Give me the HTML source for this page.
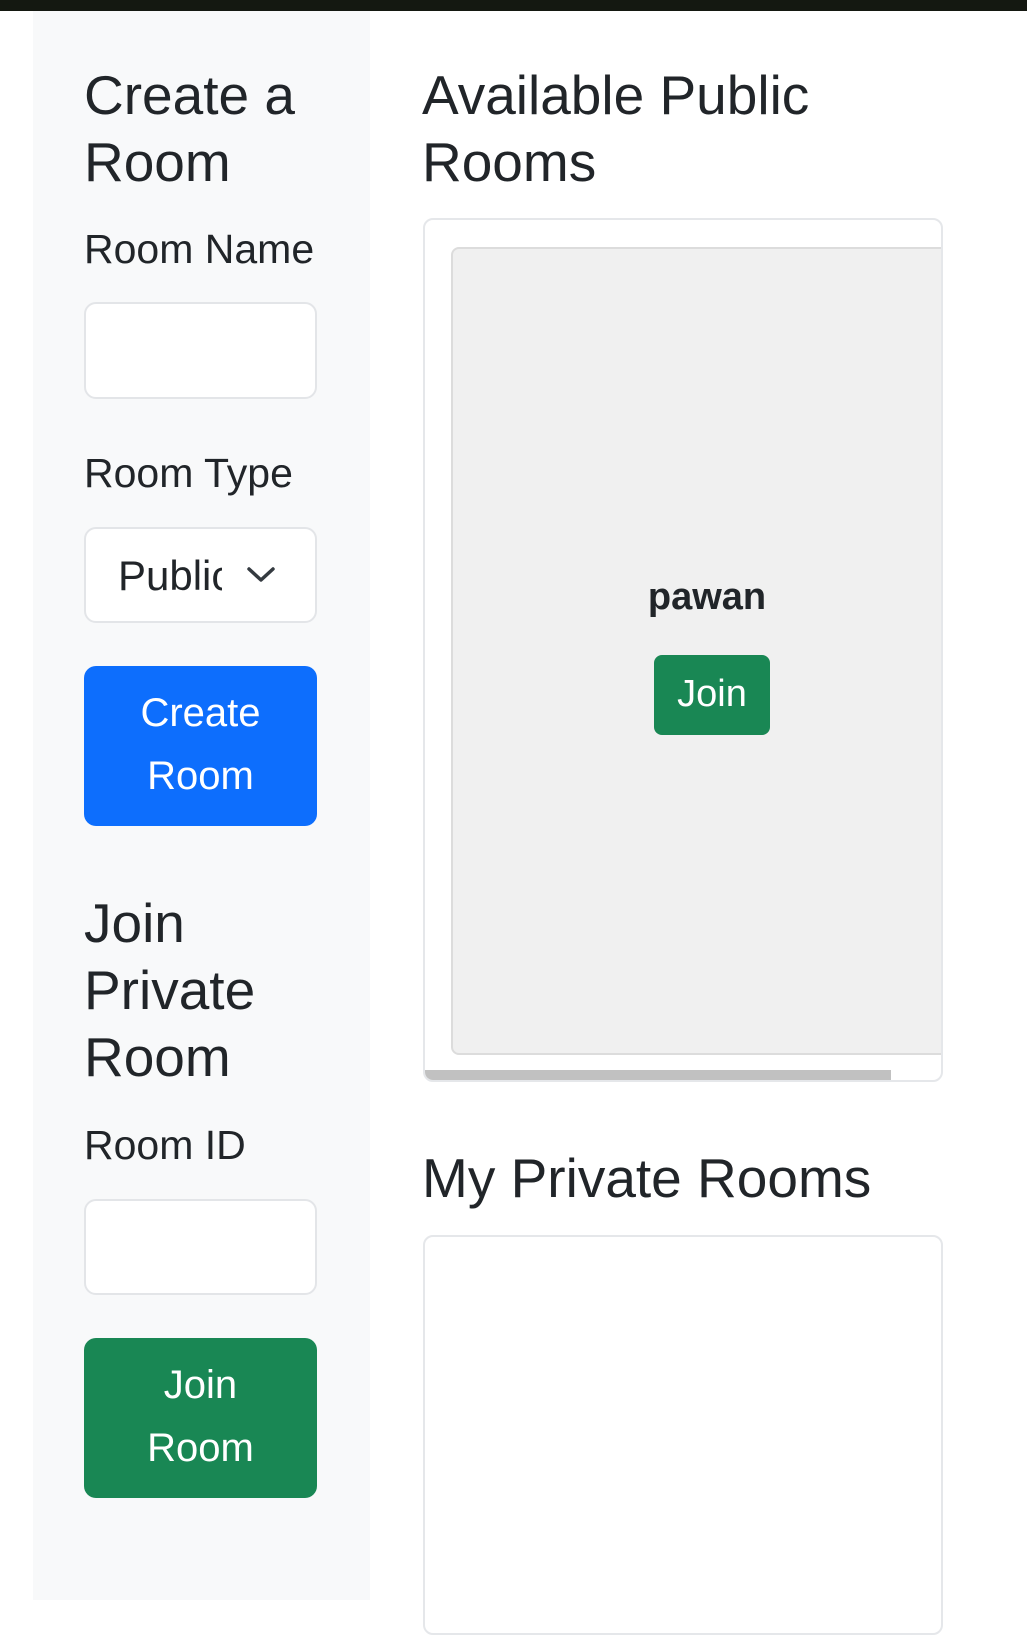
<!DOCTYPE html>
<html><head><meta charset="utf-8">
<style>
*{margin:0;padding:0;box-sizing:border-box}
body{width:1027px;height:1600px;background:#fff;font-family:"Liberation Sans",sans-serif;color:#212529;position:relative;overflow:hidden}
.a{position:absolute}
.h{font-size:55px;line-height:67px;white-space:nowrap}
.lbl{font-size:41px;color:#212529;line-height:46px;white-space:nowrap}
.inp{background:#fff;border:2px solid #e3e5e8;border-radius:12px}
.btn{border-radius:12px;color:#fff;font-size:40px;text-align:center;line-height:63px}
</style></head><body>
<div class="a" style="left:0;top:0;width:1027px;height:11px;background:#141811"></div>
<div class="a" style="left:33px;top:11px;width:337px;height:1589px;background:#f8f9fa"></div>

<div class="a h" style="left:84px;top:62px">Create a<br>Room</div>
<div class="a lbl" style="left:84px;top:226px">Room Name</div>
<div class="a inp" style="left:84px;top:302px;width:233px;height:97px"></div>
<div class="a lbl" style="left:84px;top:450px">Room Type</div>
<div class="a inp" style="left:84px;top:527px;width:233px;height:96px">
  <div class="a" style="left:32px;top:24px;font-size:42px;line-height:46px;width:104px;overflow:hidden;white-space:nowrap">Public</div>
  <svg class="a" style="left:160px;top:36px" width="30" height="20" viewBox="0 0 30 20"><path d="M3 4 L15 15 L27 4" fill="none" stroke="#343a40" stroke-width="3.5" stroke-linecap="round" stroke-linejoin="round"/></svg>
</div>
<div class="a btn" style="left:84px;top:666px;width:233px;height:160px;background:#0d6efd;padding-top:16px">Create<br>Room</div>

<div class="a h" style="left:84px;top:890px">Join<br>Private<br>Room</div>
<div class="a lbl" style="left:84px;top:1122px">Room ID</div>
<div class="a inp" style="left:84px;top:1199px;width:233px;height:96px"></div>
<div class="a btn" style="left:84px;top:1338px;width:233px;height:160px;background:#198754;padding-top:16px">Join<br>Room</div>

<div class="a h" style="left:422px;top:62px">Available Public<br>Rooms</div>
<div class="a" style="left:423px;top:218px;width:520px;height:864px;border:2px solid #e5e7ea;border-radius:10px;overflow:hidden;background:#fff">
  <div class="a" style="left:26px;top:27px;width:520px;height:808px;background:#f0f0f0;border:2px solid #dcdcdc;border-radius:8px">
    <div class="a" style="left:0;width:516px;top:326px;text-align:center;font-weight:bold;font-size:38px;line-height:44px">
      <span style="position:relative;left:-4px">pawan</span></div>
    <div class="a" style="left:201px;top:406px;width:116px;height:80px;background:#198754;border-radius:8px;color:#fff;font-size:38px;line-height:78px;text-align:center">Join</div>
  </div>
  <div class="a" style="left:0;top:850px;width:466px;height:10px;background:#c1c1c1"></div>
</div>

<div class="a h" style="left:422px;top:1145px">My Private Rooms</div>
<div class="a" style="left:423px;top:1235px;width:520px;height:400px;border:2px solid #e5e7ea;border-radius:10px;background:#fff"></div>
</body></html>
